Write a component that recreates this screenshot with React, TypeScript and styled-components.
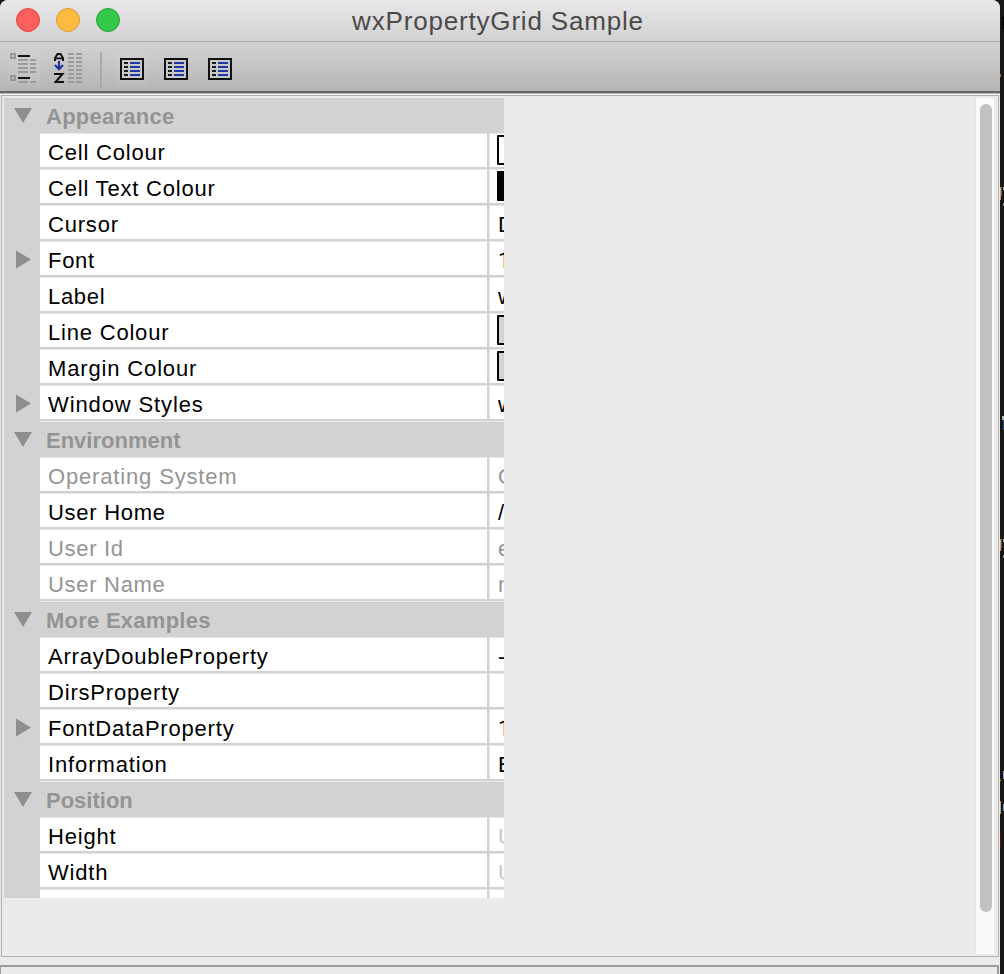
import React from 'react';
import styled, { createGlobalStyle } from 'styled-components';

const GlobalStyle = createGlobalStyle`
  * { box-sizing: border-box; }
  html, body { margin: 0; padding: 0; }
  body {
    width: 1004px;
    height: 974px;
    overflow: hidden;
    background: #181715;
    font-family: "Liberation Sans", Arial, sans-serif;
  }
`;

const Desktop = styled.div`
  display: flex;
  width: 1004px;
  height: 974px;
  overflow: hidden;
  background: #181715;
`;

const Window = styled.div`
  display: flex;
  flex-direction: column;
  width: 1000px;
  height: 974px;
  background: #ebebeb;
  border-radius: 8px 8px 0 0;
  overflow: hidden;
`;

const DesktopEdge = styled.svg`
  display: block;
  width: 4px;
  height: 974px;
`;

const TitleBar = styled.header`
  display: grid;
  grid-template-columns: 120px 1fr 124px;
  height: 42px;
  flex: none;
  background: linear-gradient(#e9e7e9, #d2d2d2);
  border-bottom: 1px solid #b0b0b0;
`;

const Lights = styled.div`
  display: flex;
  gap: 16px;
  padding: 8px 0 0 16px;
`;

const Light = styled.span<{ $fill: string; $edge: string }>`
  width: 24px;
  height: 24px;
  flex: none;
  border-radius: 50%;
  background: ${(p) => p.$fill};
  border: 1px solid ${(p) => p.$edge};
`;

const Title = styled.h1`
  margin: 0;
  text-align: center;
  font-size: 26px;
  font-weight: 400;
  line-height: 42px;
  letter-spacing: 0.82px;
  color: #4b4a4b;
  white-space: nowrap;
`;

const Toolbar = styled.div`
  display: flex;
  align-items: flex-start;
  height: 51px;
  flex: none;
  padding: 10px 0 0 8px;
  background: linear-gradient(#d3d3d3, #b5b5b5);
  border-bottom: 2px solid #666;
`;

const ToolButton = styled.button<{ $active?: boolean; $gap: number }>`
  display: block;
  width: 32px;
  height: 32px;
  margin: 0 ${(p) => p.$gap}px 0 0;
  padding: 0;
  border: 0;
  border-radius: 4px;
  background: ${(p) => (p.$active ? 'rgba(255,255,255,0.07)' : 'transparent')};
  svg { display: block; }
`;

const Separator = styled.span`
  width: 2px;
  height: 36px;
  margin-right: 14px;
  background: #a9a9a9;
`;

const Content = styled.main`
  display: flex;
  flex-direction: column;
  flex: 1;
  padding: 2px 1px 0;
  border-top: 1px solid #b5b5b5;
  background: linear-gradient(#f6f6f6 0 1px, #ebebeb 1px);
`;

const Frame = styled.section`
  display: flex;
  justify-content: space-between;
  height: 862px;
  flex: none;
  margin-top: -1px;
  padding: 2px 4px 0 2px;
  border: 1px solid #b0b0b0;
`;

const StatusPanel = styled.footer`
  height: 9px;
  flex: none;
  margin: 8px 0 0 -1px;
  border: solid #9c9c9c;
  border-width: 2px 2px 0 1px;
`;

const Grid = styled.div`
  width: 500px;
  height: 800px;
  overflow: hidden;
  background: #d2d2d2;
`;

const Rows = styled.div`
  margin-top: -1px;
`;

const Row = styled.div`
  display: grid;
  grid-template-columns: 36px 464px;
  height: 36px;
`;

const Gutter = styled.span`
  display: block;
  svg { display: block; }
`;

const CategoryLabel = styled.span<{ $ls: number }>`
  height: 36px;
  padding: 1px 0 0 6px;
  border-top: 1px solid #e8e8e8;
  font-size: 22px;
  font-weight: 700;
  line-height: 35px;
  letter-spacing: ${(p) => p.$ls}px;
  color: #949494;
  white-space: nowrap;
`;

const Cells = styled.div<{ $disabled?: boolean }>`
  display: grid;
  grid-template-columns: 447px 2px 15px;
  height: 36px;
  border-bottom: 2px solid #d2d2d2;
  color: ${(p) => (p.$disabled ? '#949494' : '#000')};
`;

const Cell = styled.span`
  display: block;
  overflow: hidden;
  height: 34px;
  background: #fff;
  border-top: 1px solid #e8e8e8;
  font-size: 22px;
  line-height: 37px;
  white-space: nowrap;
`;

const NameCell = styled(Cell)<{ $ls: number }>`
  padding-left: 8px;
  letter-spacing: ${(p) => p.$ls}px;
`;

const ValueCell = styled(Cell)<{ $faint?: boolean; $numeric?: boolean }>`
  padding-left: 8px;
  border-left: 1px solid #e8e8e8;
  ${(p) => p.$faint && 'color: #c8c8c8;'}
  ${(p) => p.$numeric && 'font-family: Roboto, sans-serif;'}
`;

const Divider = styled.span`
  background: #d2d2d2;
`;

const Swatch = styled.span<{ $fill: string }>`
  display: block;
  width: 40px;
  height: 30px;
  margin: 1px 0 0 -1px;
  border: 2px solid #000;
  border-radius: 1px;
  background: ${(p) => p.$fill};
`;

const ScrollTrack = styled.div`
  width: 20px;
  height: 856px;
  padding: 6px 2px 0 4px;
  background: #fafafa;
  border-left: 2px solid #e6e6e6;
`;

const ScrollThumb = styled.div`
  width: 12px;
  height: 808px;
  border-radius: 6px;
  background: #c1c1c1;
`;

type Item = {
  name: string;
  category?: boolean;
  expandable?: boolean;
  disabled?: boolean;
  faint?: boolean;
  numeric?: boolean;
  value?: string;
  swatch?: string;
  ls?: number;
};

const items: Item[] = [
  { name: 'Appearance', category: true },
  { name: 'Cell Colour', swatch: '#fff' },
  { name: 'Cell Text Colour', swatch: '#000' },
  { name: 'Cursor', value: 'D' },
  { name: 'Font', expandable: true, value: '1', numeric: true, ls: 0.7 },
  { name: 'Label', value: 'w', ls: 0.7 },
  { name: 'Line Colour', swatch: '#d2d2d2' },
  { name: 'Margin Colour', swatch: '#d2d2d2', ls: 0.85 },
  { name: 'Window Styles', expandable: true, value: 'w', ls: 0.88 },
  { name: 'Environment', category: true, ls: 0 },
  { name: 'Operating System', disabled: true, value: 'O', ls: 0.84 },
  { name: 'User Home', value: '/', ls: 0.72 },
  { name: 'User Id', disabled: true, value: 'e', ls: 0.7 },
  { name: 'User Name', disabled: true, value: 'n', ls: 0.7 },
  { name: 'More Examples', category: true },
  { name: 'ArrayDoubleProperty', value: '-' },
  { name: 'DirsProperty' },
  { name: 'FontDataProperty', expandable: true, value: '1', numeric: true },
  { name: 'Information', value: 'E', ls: 0.88 },
  { name: 'Position', category: true, ls: 0 },
  { name: 'Height', faint: true, value: 'U' },
  { name: 'Width', faint: true, value: 'U' },
  { name: '' },
];

const Arrow = ({ open }: { open?: boolean }) => (
  <svg width="36" height="36">
    <path d={open ? 'M10 11H28L19 26Z' : 'M12 9.500V27.500L27 18.500Z'} fill="#8e8e8e" />
  </svg>
);

const bars = (x: number, w: number, ys: number[], fill: string) =>
  ys.map((y) => <rect key={`${x}-${y}`} x={x} y={y} width={w} height="2" fill={fill} />);

const CategoryIcon = () => (
  <svg width="32" height="32">
    <rect x="3" y="2" width="4" height="4" fill="none" stroke="#979797" strokeWidth="2" />
    <rect x="3" y="24" width="4" height="4" fill="none" stroke="#979797" strokeWidth="2" />
    {bars(10, 12, [3, 25], '#161616')}
    {bars(10, 10, [7, 11, 15, 19, 29], '#9b9b9b')}
    {bars(22, 6, [7, 11, 15, 19, 29], '#9b9b9b')}
  </svg>
);

const SortIcon = () => (
  <svg width="32" height="32">
    <polyline points="1,9 1,6 3.5,2 6.5,2 9,6 9,9" fill="none" stroke="#111" strokeWidth="2" />
    <rect x="1" y="5.500" width="8" height="1.800" fill="#111" />
    <path d="M5 9V17M1 13L5 17.200L9 13" fill="none" stroke="#1b2f9c" strokeWidth="2" />
    <polyline points="0,22 8.500,22 1.500,30 10,30" fill="none" stroke="#111" strokeWidth="2" />
    {bars(14, 6, [1, 5, 9, 13, 17, 21, 25, 29], '#9b9b9b')}
    {bars(22, 6, [1, 5, 9, 13, 17, 21, 25, 29], '#9b9b9b')}
  </svg>
);

const PageIcon = () => (
  <svg width="32" height="32">
    <rect x="5" y="7" width="22" height="20" fill="#c9c9c9" stroke="#111" strokeWidth="2" />
    {bars(8, 4, [10, 14, 18, 22], '#1b1b1b')}
    {bars(14, 10, [10, 14, 18, 22], '#2136a4')}
  </svg>
);

const PropertyRow = ({ item }: { item: Item }) => {
  if (item.category) {
    return (
      <Row>
        <Gutter><Arrow open /></Gutter>
        <CategoryLabel $ls={item.ls ?? 0.25}>{item.name}</CategoryLabel>
      </Row>
    );
  }
  return (
    <Row>
      <Gutter>{item.expandable && <Arrow />}</Gutter>
      <Cells $disabled={item.disabled}>
        <NameCell $ls={item.ls ?? 0.8}>{item.name}</NameCell>
        <Divider />
        <ValueCell $faint={item.faint} $numeric={item.numeric}>
          {item.swatch ? <Swatch $fill={item.swatch} /> : item.value}
        </ValueCell>
      </Cells>
    </Row>
  );
};

// Slivers of the windows behind: x, y, width, height, colour.
const slivers: [number, number, number, number, string][] = [
  [2, 17, 2, 12, '#050505'],
  [0, 74, 1, 3, '#a5703a'],
  [0, 187, 1, 13, '#b9a48c'],
  [1, 187, 1, 9, '#8a5426'],
  [3, 187, 1, 3, '#8ea6b4'],
  [3, 203, 1, 3, '#7f97a6'],
  [2, 416, 2, 4, '#a9b5c0'],
  [3, 420, 1, 10, '#25508a'],
  [0, 539, 1, 12, '#b9a48c'],
  [1, 539, 1, 9, '#8a5426'],
  [3, 539, 1, 3, '#8ea6b4'],
  [3, 555, 1, 3, '#7f97a6'],
  [3, 771, 1, 8, '#8d97cc'],
  [0, 779, 1, 3, '#8a4d16'],
  [0, 801, 1, 13, '#b5a58c'],
  [3, 804, 1, 7, '#6d9cc4'],
  [0, 833, 1, 15, '#5a0f0f'],
];

export default function App() {
  return (
    <>
      <GlobalStyle />
      <Desktop>
        <Window>
          <TitleBar>
            <Lights>
              <Light $fill="#fc605c" $edge="#e14640" />
              <Light $fill="#fdbc40" $edge="#dd9a34" />
              <Light $fill="#34c84a" $edge="#27a033" />
            </Lights>
            <Title>wxPropertyGrid Sample</Title>
          </TitleBar>
          <Toolbar>
            <ToolButton $active $gap={14}><CategoryIcon /></ToolButton>
            <ToolButton $gap={14}><SortIcon /></ToolButton>
            <Separator />
            <ToolButton $active $gap={12}><PageIcon /></ToolButton>
            <ToolButton $gap={12}><PageIcon /></ToolButton>
            <ToolButton $gap={0}><PageIcon /></ToolButton>
          </Toolbar>
          <Content>
            <Frame>
              <Grid>
                <Rows>
                  {items.map((item, i) => <PropertyRow key={i} item={item} />)}
                </Rows>
              </Grid>
              <ScrollTrack><ScrollThumb /></ScrollTrack>
            </Frame>
            <StatusPanel />
          </Content>
        </Window>
        <DesktopEdge viewBox="0 0 4 974">
          {slivers.map(([x, y, w, h, fill]) => (
            <rect key={`${x}-${y}`} x={x} y={y} width={w} height={h} fill={fill} />
          ))}
        </DesktopEdge>
      </Desktop>
    </>
  );
}
